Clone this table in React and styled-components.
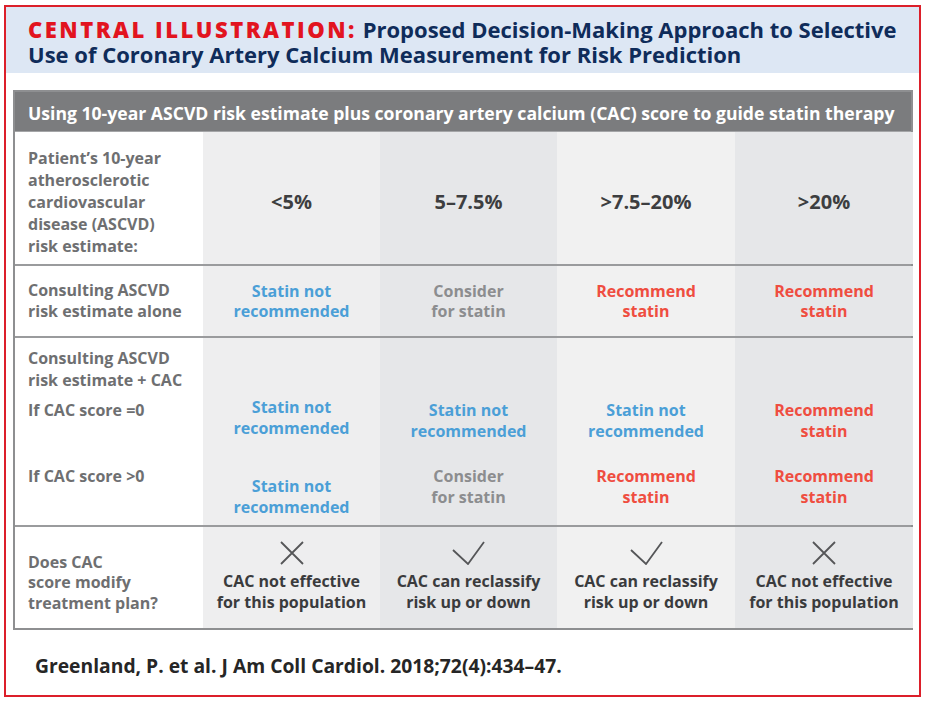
import React from 'react';
import styled, { createGlobalStyle } from 'styled-components';

const GlobalStyle = createGlobalStyle`
  html, body {
    margin: 0;
    padding: 0;
    background: #ffffff;
  }
  * {
    box-sizing: border-box;
  }
`;

const Frame = styled.div`
  width: 917px;
  height: 692px;
  margin: 5px 0 0 4px;
  border: 2px solid #dc1f2a;
  display: flex;
  flex-direction: column;
  background: #ffffff;
  font-family: "Open Sans", "Liberation Sans", sans-serif;
`;

const HeaderBand = styled.div`
  height: 66px;
  background: #dde7f4;
  padding: 10px 0 0 22px;
`;

const Title = styled.h1`
  margin: 0;
  font-size: 22px;
  font-weight: 700;
  color: #0f2c5a;
`;

const TitleLine = styled.div`
  height: 25px;
  line-height: 25px;
  white-space: nowrap;
`;

const Kicker = styled.span`
  color: #e2141f;
  font-weight: 800;
  letter-spacing: 2.5px;
`;

const Body = styled.div`
  flex: 1;
  padding: 17px 6px 0 7px;
`;

const Table = styled.div`
  width: 900px;
  border: 2px solid #8e8f91;
`;

const TableHead = styled.div`
  height: 40px;
  background: #7b7c7e;
  color: #ffffff;
  font-size: 17.6px;
  font-weight: 700;
  display: flex;
  align-items: center;
  padding: 2px 0 0 13px;
  white-space: nowrap;
  border-bottom: 1px solid #a4a5a7;
`;

const Row = styled.div`
  display: grid;
  grid-template-columns: 188px 177px 177px 178px 178px;
  height: ${p => p.$h}px;
  border-bottom: ${p => (p.$last ? 'none' : '2px solid #9a9b9d')};
`;

const LabelCell = styled.div`
  background: #ffffff;
  padding: ${p => p.$pad || '0 0 0 13px'};
  display: flex;
  flex-direction: column;
  justify-content: ${p => (p.$top ? 'flex-start' : 'center')};
  color: #6e6f71;
  font-size: 16px;
  font-weight: 700;
  line-height: ${p => p.$lh || 21}px;
  white-space: nowrap;
`;

const SubLabel = styled.div`
  margin-top: ${p => p.$mt}px;
`;

const ValueCell = styled.div`
  background: ${p => p.$bg};
  display: flex;
  flex-direction: column;
  align-items: center;
  justify-content: ${p => (p.$top ? 'flex-start' : 'center')};
  padding-top: ${p => p.$pt || 0}px;
  text-align: center;
  white-space: nowrap;
`;

const Value = styled.div`
  font-size: 16px;
  font-weight: 700;
  line-height: 20.5px;
  color: ${p => p.$color};
  margin-top: ${p => p.$mt || 0}px;
`;

const Percent = styled.div`
  font-size: 20px;
  font-weight: 700;
  color: #3d3e40;
  margin-top: 6px;
`;

const Footer = styled.div`
  padding: 22px 0 0 22px;
  font-size: 19.3px;
  font-weight: 700;
  color: #262626;
`;

const IconWrap = styled.div`
  height: 26px;
  display: flex;
  align-items: center;
  justify-content: center;
  margin-bottom: 5px;
`;

const colBg = ['#eeeeef', '#e6e7e9', '#f1f1f1', '#e6e7e9'];

const C = {
  blue: '#4b9fd7',
  red: '#ef4d40',
  gray: '#8c8d8f',
  dark: '#3a3b3d',
};

const NOT = { color: C.blue, lines: ['Statin not', 'recommended'] };
const CONSIDER = { color: C.gray, lines: ['Consider', 'for statin'] };
const RECOMMEND = { color: C.red, lines: ['Recommend', 'statin'] };

const Cross = () => (
  <svg width="24" height="24" viewBox="0 0 24 24">
    <path d="M1 1 L23 23 M23 1 L1 23" stroke="#555658" strokeWidth="1.8" fill="none" />
  </svg>
);

const Check = () => (
  <svg width="33" height="24" viewBox="0 0 33 24">
    <path d="M1 9 L16 23 L32 1" stroke="#555658" strokeWidth="1.8" fill="none" />
  </svg>
);

const Text = ({ item, mt }) => (
  <Value $color={item.color} $mt={mt}>
    {item.lines.map(l => (
      <div key={l}>{l}</div>
    ))}
  </Value>
);

const percents = ['<5%', '5–7.5%', '>7.5–20%', '>20%'];
const alone = [NOT, CONSIDER, RECOMMEND, RECOMMEND];
const withCac = [
  { zero: NOT, pos: NOT, top: 59, gap: 38 },
  { zero: NOT, pos: CONSIDER, top: 62, gap: 25 },
  { zero: NOT, pos: RECOMMEND, top: 62, gap: 25 },
  { zero: RECOMMEND, pos: RECOMMEND, top: 62, gap: 25 },
];
const modify = [
  { icon: <Cross />, lines: ['CAC not effective', 'for this population'] },
  { icon: <Check />, lines: ['CAC can reclassify', 'risk up or down'] },
  { icon: <Check />, lines: ['CAC can reclassify', 'risk up or down'] },
  { icon: <Cross />, lines: ['CAC not effective', 'for this population'] },
];

export default function App() {
  return (
    <>
      <GlobalStyle />
      <Frame>
        <HeaderBand>
          <Title>
            <TitleLine>
              <Kicker>CENTRAL ILLUSTRATION:</Kicker> Proposed Decision-Making Approach to Selective
            </TitleLine>
            <TitleLine>Use of Coronary Artery Calcium Measurement for Risk Prediction</TitleLine>
          </Title>
        </HeaderBand>
        <Body>
          <Table>
            <TableHead>
              Using 10-year ASCVD risk estimate plus coronary artery calcium (CAC) score to guide statin therapy
            </TableHead>

            <Row $h={134}>
              <LabelCell $lh={22} $pad="8px 0 0 13px">
                <div>Patient’s 10-year</div>
                <div>atherosclerotic</div>
                <div>cardiovascular</div>
                <div>disease (ASCVD)</div>
                <div>risk estimate:</div>
              </LabelCell>
              {percents.map((p, i) => (
                <ValueCell key={p} $bg={colBg[i]}>
                  <Percent>{p}</Percent>
                </ValueCell>
              ))}
            </Row>

            <Row $h={72}>
              <LabelCell>
                <div>Consulting ASCVD</div>
                <div>risk estimate alone</div>
              </LabelCell>
              {alone.map((item, i) => (
                <ValueCell key={i} $bg={colBg[i]}>
                  <Text item={item} />
                </ValueCell>
              ))}
            </Row>

            <Row $h={189}>
              <LabelCell $top $pad="9px 0 0 13px" $lh={22}>
                <div>Consulting ASCVD</div>
                <div>risk estimate + CAC</div>
                <SubLabel $mt={8}>If CAC score =0</SubLabel>
                <SubLabel $mt={44}>If CAC score &gt;0</SubLabel>
              </LabelCell>
              {withCac.map((c, i) => (
                <ValueCell key={i} $bg={colBg[i]} $top $pt={c.top}>
                  <Text item={c.zero} />
                  <Text item={c.pos} mt={c.gap} />
                </ValueCell>
              ))}
            </Row>

            <Row $h={101} $last>
              <LabelCell $pad="10px 0 0 13px" $lh={20.5}>
                <div>Does CAC</div>
                <div>score modify</div>
                <div>treatment plan?</div>
              </LabelCell>
              {modify.map((m, i) => (
                <ValueCell key={i} $bg={colBg[i]} $top $pt={13}>
                  <IconWrap>{m.icon}</IconWrap>
                  <Value $color={C.dark}>
                    {m.lines.map(l => (
                      <div key={l}>{l}</div>
                    ))}
                  </Value>
                </ValueCell>
              ))}
            </Row>
          </Table>
          <Footer>Greenland, P. et al. J Am Coll Cardiol. 2018;72(4):434–47.</Footer>
        </Body>
      </Frame>
    </>
  );
}
